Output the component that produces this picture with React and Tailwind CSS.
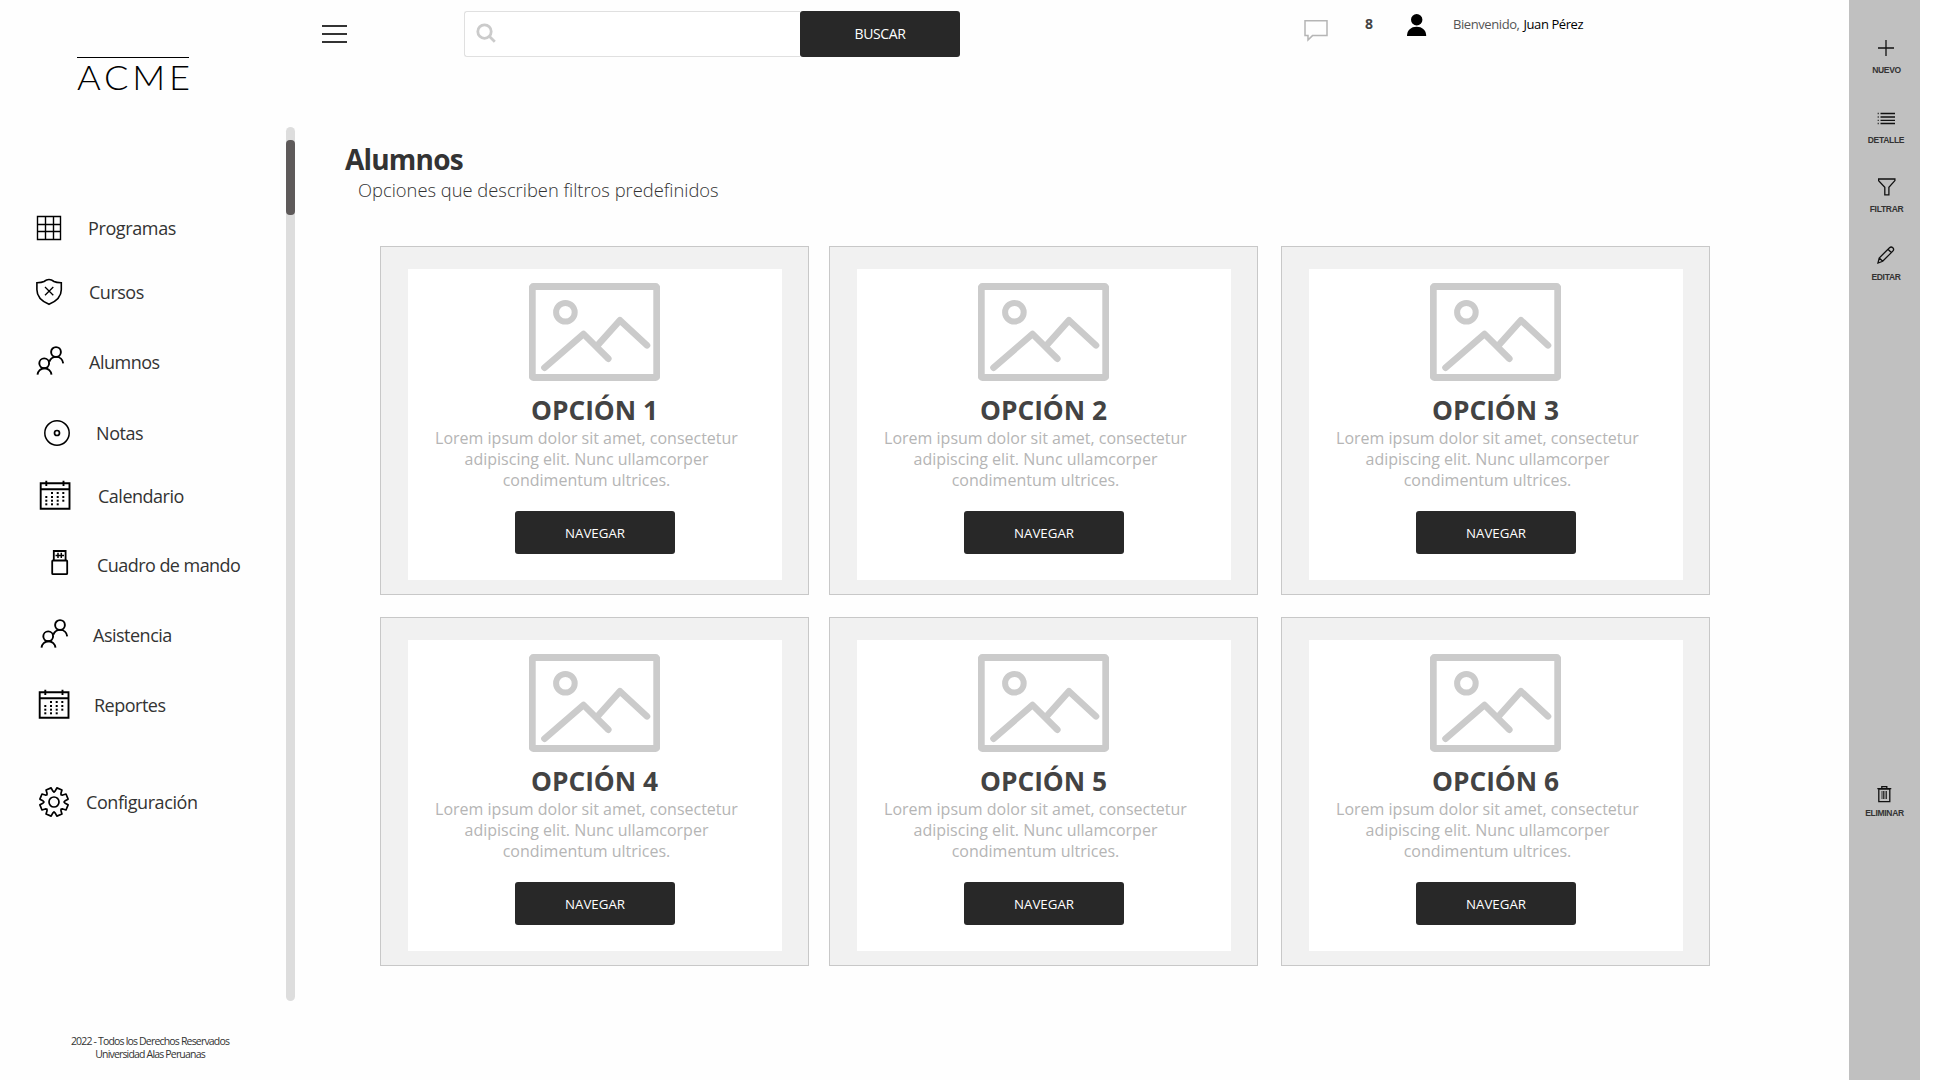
import React from "react";

function GridIcon() {
  return (
    <svg viewBox="0 0 32 32" className="size-8 shrink-0" fill="none" stroke="#000" strokeWidth="1.4">
      <path d="M4.500 4.500h23v23h-23zM12.500 4.500v23M20.500 4.500v23M4.500 12.500h23M4.500 19.500h23" />
    </svg>
  );
}

function ShieldIcon() {
  return (
    <svg viewBox="0 0 32 32" className="size-8 shrink-0" fill="none" stroke="#000" strokeWidth="1.600">
      <path d="M16 3.500c2 0 3.600 .9 5 2 1.800 1 4.500 1.200 7.300 1.200v7c0 6.500-5 11.500-12.300 14.600C8.700 25.200 3.900 20.200 3.900 13.700v-7c2.800 0 5.300-.2 7.100-1.200 1.400-1.100 3-2 5-2z" />
      <path d="M12 11l8.300 8.300M20.300 11L12 19.300" strokeWidth="1.300" />
    </svg>
  );
}

function PeopleIcon() {
  return (
    <svg viewBox="0 0 32 32" className="size-8 shrink-0" fill="none" stroke="#000" strokeWidth="1.900">
      <circle cx="22" cy="6" r="4.900" />
      <circle cx="10.200" cy="17.300" r="4.900" />
      <path d="M3.500 28.700c.3-3.600 3.300-6.500 7-6.500s6.700 2.900 7 6.500" />
      <path d="M15.300 15.800c1-2.800 3.500-4.900 6.800-4.900 3.700 0 6.700 2.700 7.100 6.500" />
    </svg>
  );
}

function DiscIcon() {
  return (
    <svg viewBox="0 0 32 32" className="size-8 shrink-0" fill="none" stroke="#000" strokeWidth="1.500">
      <circle cx="16" cy="16" r="12.200" />
      <circle cx="16" cy="16" r="2.500" strokeWidth="1.700" />
    </svg>
  );
}

function CalendarIcon() {
  const cols = [7.3, 13, 18.7, 24.3];
  const rows = [13, 17, 20.7, 24.3];
  return (
    <svg viewBox="0 0 32 32" className="size-8 shrink-0" fill="none" stroke="#000" strokeWidth="1.900">
      <path d="M1.700 3.300h28.800v25.400H1.700zM1.700 9.300h28.800M7.300 .8v5.200M24.500 .8v5.200" />
      {rows.map((y, r) =>
        cols.map((x, c) =>
          (r === 0 && c === 0) || (r === 3 && c === 3) ? null : (
            <rect key={r + "-" + c} x={x - 1} y={y - 1} width="2" height="2" fill="#000" stroke="none" />
          )
        )
      )}
    </svg>
  );
}

function UsbIcon() {
  return (
    <svg viewBox="0 0 32 32" className="size-8 shrink-0" fill="none" stroke="#000" strokeWidth="1.800">
      <rect x="8.200" y="11.500" width="15" height="13.700" rx=".8" />
      <path d="M9.800 11.300V2h11.800v9.300" />
      <path d="M11.500 6.500h8.500M14 3.800v5.200M17.300 3.800v5.200" strokeWidth="1.500" />
    </svg>
  );
}

function GearIcon() {
  const pts = [];
  for (let i = 0; i < 8; i++) {
    const c = i * 45 + 22.5;
    [[11.2, -16], [14.4, -11], [14.4, 11], [11.2, 16], [10, 22.5]].forEach(([r, d]) => {
      const a = ((c + d - 90) * Math.PI) / 180;
      pts.push((16 + r * Math.cos(a)).toFixed(2) + "," + (16 + r * Math.sin(a)).toFixed(2));
    });
  }
  return (
    <svg viewBox="0 0 32 32" className="size-8 shrink-0" fill="none" stroke="#000" strokeWidth="1.700" strokeLinejoin="round">
      <polygon points={pts.join(" ")} />
      <circle cx="16" cy="16" r="5" />
    </svg>
  );
}

const nav = [
  { label: "Programas", icon: GridIcon, row: "pl-[33px] gap-[23px] tracking-[-0.38px]" },
  { label: "Cursos", icon: ShieldIcon, row: "mt-6 pl-[33px] gap-6 tracking-[-0.5px]" },
  { label: "Alumnos", icon: PeopleIcon, row: "mt-[30px] pl-[34px] gap-[23px] tracking-[-0.5px]" },
  { label: "Notas", icon: DiscIcon, row: "mt-[31px] pl-[41px] gap-[23px] tracking-[-0.42px]" },
  { label: "Calendario", icon: CalendarIcon, row: "mt-[23px] pl-[39px] gap-[27px] tracking-[-0.5px]" },
  { label: "Cuadro de mando", icon: UsbIcon, row: "mt-[29px] pl-[44px] gap-[21px] tracking-[-0.55px]" },
  { label: "Asistencia", icon: PeopleIcon, row: "mt-[30px] pl-[38px] gap-[23px] tracking-[-0.5px]" },
  { label: "Reportes", icon: CalendarIcon, row: "mt-[30px] pl-[38px] gap-6 tracking-[-0.5px]" },
  { label: "Configuración", icon: GearIcon, row: "mt-[57px] pl-[37.500px] gap-[16.5px] tracking-[-0.42px]" },
];

function Sidebar() {
  return (
    <aside className="flex w-[286px] shrink-0 flex-col">
      <div className="ml-[77px] mt-[57px] w-[112px] border-t border-black">
        <div className="mt-[6px] origin-left scale-x-110 whitespace-nowrap font-['Lato',sans-serif] text-[33px] leading-[26px] font-light tracking-[3.4px] text-black">ACME</div>
      </div>
      <nav className="mt-[118px] flex flex-col">
        {nav.map(({ label, icon: Icon, row }) => (
          <a key={label} className={"flex h-10 items-center whitespace-nowrap text-lg leading-10 text-[#333] " + row}>
            <Icon />
            {label}
          </a>
        ))}
      </nav>
      <footer className="mt-[213px] pl-[14px] text-center text-[10.5px] leading-[13px] tracking-[-0.82px] text-[#333]">
        <p>2022 - Todos los Derechos Reservados</p>
        <p>Universidad Alas Peruanas</p>
      </footer>
    </aside>
  );
}

function Header() {
  return (
    <header className="flex h-[57px] items-start">
      <div className="ml-[27px] mt-[25px] flex w-[25px] flex-col gap-[6px]">
        <span className="h-[2px] bg-[#333]" />
        <span className="h-[2px] bg-[#333]" />
        <span className="h-[2px] bg-[#333]" />
      </div>
      <div className="ml-[117px] mt-[11px] flex h-[46px]">
        <div className="flex w-[336px] items-start rounded-l-[3px] border border-r-0 border-[#e0e0e0] bg-white pl-[11px] pt-[11px]">
          <svg viewBox="0 0 20 20" className="size-5" fill="none" stroke="#cbcbcb" strokeWidth="2.800">
            <circle cx="8.500" cy="8.600" r="6.700" />
            <path d="M13.300 13.300l5.500 5.400" />
          </svg>
        </div>
        <button className="w-40 rounded-[3px] bg-[#282828] text-sm tracking-[-0.4px] text-white">BUSCAR</button>
      </div>
      <svg viewBox="0 0 24 22" className="ml-[344px] mt-5 h-[22px] w-6" fill="none" stroke="#b5b5b5" strokeWidth="1.500">
        <path d="M1 .8h22v14.800H8.500L4 20v-4.400H1z" />
      </svg>
      <span className="ml-[37px] mt-[14px] w-[9px] text-sm font-bold leading-5 text-[#444]">8</span>
      <svg viewBox="0 0 20 22" className="ml-[33px] mt-[14px] h-[22px] w-5" fill="#000">
        <circle cx="9.700" cy="5.700" r="5.700" />
        <path d="M0 22c0-5.800 4-9.200 9.600-9.200S19.200 16.200 19.200 22z" />
      </svg>
      <p className="ml-[26px] mt-[14px] whitespace-nowrap text-[13px] leading-5 tracking-[-0.42px] text-[#555]">
        Bienvenido, <span className="ml-px text-black">Juan Pérez</span>
      </p>
    </header>
  );
}

function Card({ n }) {
  return (
    <article className="h-[349px] w-[429px] border border-[#c8c8c8] bg-[#f1f1f1] pl-[27px] pt-[22px]">
      <div className="flex h-[311px] w-[374px] flex-col items-center bg-white pt-[14px]">
        <svg viewBox="0 0 131 98" className="mr-[2px] h-[98px] w-[131px] shrink-0" fill="none" stroke="#cbcbcb">
          <rect x="3.300" y="3.500" width="124.400" height="91" rx="1" strokeWidth="6.800" />
          <circle cx="36.400" cy="29.300" r="9.300" strokeWidth="6" />
          <path d="M15.500 84.700L54.500 51 79.300 75.700M67.500 63.500L91 37.300l27 25" strokeWidth="6.600" strokeLinecap="round" strokeLinejoin="round" />
        </svg>
        <h2 className="-ml-px mt-[12px] text-[26.3px] leading-[34px] font-bold text-[#434343]">OPCIÓN {n}</h2>
        <p className="-ml-[17px] mt-px w-[312px] text-center text-base leading-[21px] text-[#b5b5b5]">
          Lorem ipsum dolor sit amet, consectetur adipiscing elit. Nunc ullamcorper condimentum ultrices.
        </p>
        <button className="mt-5 h-[43px] w-40 rounded-[3px] bg-[#282828] pt-[2px] text-[13.3px] text-white">NAVEGAR</button>
      </div>
    </article>
  );
}

function Tool({ label, className, labelClass, children }) {
  return (
    <div className={"flex flex-col items-center " + className}>
      <svg viewBox="0 0 18 18" className="size-[18px]" fill="none" stroke="#111" strokeWidth="1.300">
        {children}
      </svg>
      <span className={"whitespace-nowrap font-['Liberation_Sans',Arial,sans-serif] text-[8.5px] leading-[10px] font-bold tracking-[-0.3px] text-[#333] " + (labelClass || "mt-2")}>{label}</span>
    </div>
  );
}

function Toolbar() {
  return (
    <aside className="flex w-[71px] shrink-0 flex-col bg-[#c0c0c0]">
      <Tool label="NUEVO" className="mt-[39px] pl-[4px]">
        <path d="M8 1v16M0 9h16" />
      </Tool>
      <Tool label="DETALLE" className="mt-[34px] pl-[3px]">
        <path d="M3.500 4.500H18M3.500 8H18M3.500 11.300H18M3.500 14.500H18M.7 4.500h1M.7 8h1M.7 11.300h1M.7 14.500h1" />
      </Tool>
      <Tool label="FILTRAR" className="mt-[33px] pl-[4px]">
        <path d="M.6 1h16.300v1.600l-6 6.600v7.600H6.800V9.200L.6 2.600z" />
      </Tool>
      <Tool label="EDITAR" className="mt-[32px] pl-[3px]">
        <path d="M1 17l1.200-5L12.500 1.800c1-1 2.300-1 3.300 0s1 2.300 0 3.300L5.700 15.300zM2.200 12l3.500 3.300M11 3.300l3.500 3.500" strokeWidth="1.300" />
      </Tool>
      <Tool label="ELIMINAR" className="mt-[503px]" labelClass="mt-[5px]">
        <path d="M2.800 4h11v12.700h-11zM1.300 3.700h14M5.800 3.700V1.700h5v2" strokeWidth="1.300" />
        <path d="M6 6v8M7.500 6v8M9 6v8M10.500 6v8" strokeWidth=".8" />
      </Tool>
    </aside>
  );
}

export default function App() {
  return (
    <div className="flex h-[1080px] w-[1942px] overflow-hidden bg-white font-['Open_Sans','Noto_Sans',sans-serif]">
      <div className="flex w-[1920px] bg-[#fefefe]">
        <Sidebar />
        <div className="mt-[127px] h-[874px] w-[9px] shrink-0 rounded-full bg-[#ddd] pt-[13px]">
          <div className="h-[75px] rounded bg-[#5e5a5a]" />
        </div>
        <main className="w-[1554px]">
          <Header />
          <h1 className="ml-[50px] mt-[82px] text-[28px] leading-10 font-bold tracking-[-0.8px] text-[#333]">Alumnos</h1>
          <p className="ml-[63px] mt-[-2px] text-[18.35px] leading-[26px] font-light text-[#333]">
            Opciones que describen filtros predefinidos
          </p>
          <div className="ml-[85px] mt-[43px] grid grid-cols-[449px_452px_429px] gap-y-[22px]">
            {[1, 2, 3, 4, 5, 6].map((n) => (
              <Card key={n} n={n} />
            ))}
          </div>
        </main>
        <Toolbar />
      </div>
    </div>
  );
}
